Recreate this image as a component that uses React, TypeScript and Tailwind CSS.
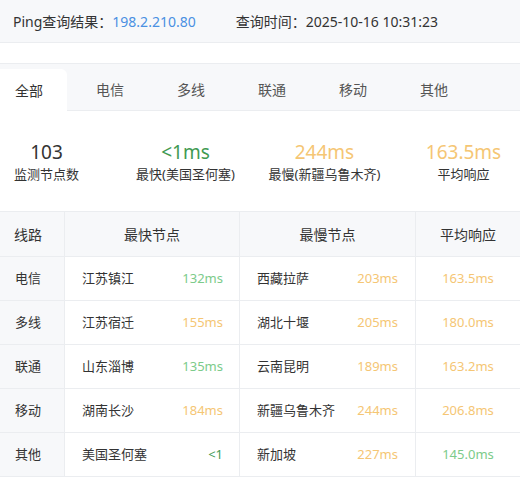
import React from 'react';

type Tone = 'green' | 'orange' | 'dark';

interface Row {
  line: string;
  fastNode: string;
  fastMs: string;
  fastTone: Tone;
  slowNode: string;
  slowMs: string;
  avg: string;
  avgTone: Tone;
}

const rows: Row[] = [
  { line: '电信', fastNode: '江苏镇江', fastMs: '132ms', fastTone: 'green', slowNode: '西藏拉萨', slowMs: '203ms', avg: '163.5ms', avgTone: 'orange' },
  { line: '多线', fastNode: '江苏宿迁', fastMs: '155ms', fastTone: 'orange', slowNode: '湖北十堰', slowMs: '205ms', avg: '180.0ms', avgTone: 'orange' },
  { line: '联通', fastNode: '山东淄博', fastMs: '135ms', fastTone: 'green', slowNode: '云南昆明', slowMs: '189ms', avg: '163.2ms', avgTone: 'orange' },
  { line: '移动', fastNode: '湖南长沙', fastMs: '184ms', fastTone: 'orange', slowNode: '新疆乌鲁木齐', slowMs: '244ms', avg: '206.8ms', avgTone: 'orange' },
  { line: '其他', fastNode: '美国圣何塞', fastMs: '<1', fastTone: 'dark', slowNode: '新加坡', slowMs: '227ms', avg: '145.0ms', avgTone: 'green' },
];

const toneClass: Record<Tone, string> = {
  green: 'text-[#7ccb8a]',
  orange: 'text-[#f5c674]',
  dark: 'text-[#3f9a52]',
};

const tabs = ['全部', '电信', '多线', '联通', '移动', '其他'];

const stats = [
  { value: '103', label: '监测节点数', cls: 'text-[#333]' },
  { value: '<1ms', label: '最快(美国圣何塞)', cls: 'text-[#3f9a52]' },
  { value: '244ms', label: '最慢(新疆乌鲁木齐)', cls: 'text-[#f5c674]' },
  { value: '163.5ms', label: '平均响应', cls: 'text-[#f5c674]' },
];

const App: React.FC = () => {
  return (
    <div
      className="w-[520px] h-[483px] overflow-hidden bg-white text-[#333]"
      style={{ fontFamily: '"Noto Sans", "Noto Sans CJK SC", sans-serif' }}
    >
      {/* Result header */}
      <div className="h-[43px] bg-[#f7f8fa] border-b border-[#ebedf0] flex items-center pl-[13px] text-[14px]">
        <span>Ping查询结果：</span>
        <span className="text-[#4a90e2]">198.2.210.80</span>
        <span className="ml-[40px]">查询时间：2025-10-16 10:31:23</span>
      </div>

      {/* Tabs */}
      <div className="mt-[20px] h-[48px] bg-[#f7f8fa] border-t border-b border-[#ebedf0] flex items-end">
        {tabs.map((t, i) => (
          <div
            key={t}
            className={`w-[67px] mr-[14px] pl-[15px] flex items-center text-[14px] ${
              i === 0 ? 'bg-white rounded-tr-[6px] text-[#333] -mb-px h-[42px]' : 'h-[41px] text-[#555]'
            }`}
          >
            {t}
          </div>
        ))}
      </div>

      {/* Summary */}
      <div className="-ml-[23px] flex mt-[29px]">
        {stats.map((s) => (
          <div key={s.label} className="w-[139px] shrink-0 flex flex-col items-center">
            <div className={`text-[19px] leading-[24px] ${s.cls}`}>{s.value}</div>
            <div className="text-[13px] leading-[20px] text-[#333]">{s.label}</div>
          </div>
        ))}
      </div>

      {/* Table */}
      <div className="mt-[27px] border-t border-[#ebedf0]">
        <div className="grid grid-cols-[65px_175px_176px_104px] h-[45px] bg-[#f7f8fa] border-b border-[#ebedf0] text-[14px]">
          <div className="flex items-center pl-[14px] border-r border-[#ebedf0]">线路</div>
          <div className="flex items-center justify-center border-r border-[#ebedf0]">最快节点</div>
          <div className="flex items-center justify-center border-r border-[#ebedf0]">最慢节点</div>
          <div className="flex items-center justify-center">平均响应</div>
        </div>
        {rows.map((r) => (
          <div
            key={r.line}
            className="grid grid-cols-[65px_175px_176px_104px] h-[44px] border-b border-[#ebedf0] text-[13px]"
          >
            <div className="flex items-center pl-[15px] bg-[#f7f8fa] border-r border-[#ebedf0]">{r.line}</div>
            <div className="flex items-center justify-between pl-[17px] pr-[16px] border-r border-[#ebedf0]">
              <span>{r.fastNode}</span>
              <span className={toneClass[r.fastTone]}>{r.fastMs}</span>
            </div>
            <div className="flex items-center justify-between pl-[17px] pr-[17px] border-r border-[#ebedf0]">
              <span>{r.slowNode}</span>
              <span className={toneClass.orange}>{r.slowMs}</span>
            </div>
            <div className={`flex items-center justify-center ${toneClass[r.avgTone]}`}>{r.avg}</div>
          </div>
        ))}
      </div>
    </div>
  );
};

export default App;
